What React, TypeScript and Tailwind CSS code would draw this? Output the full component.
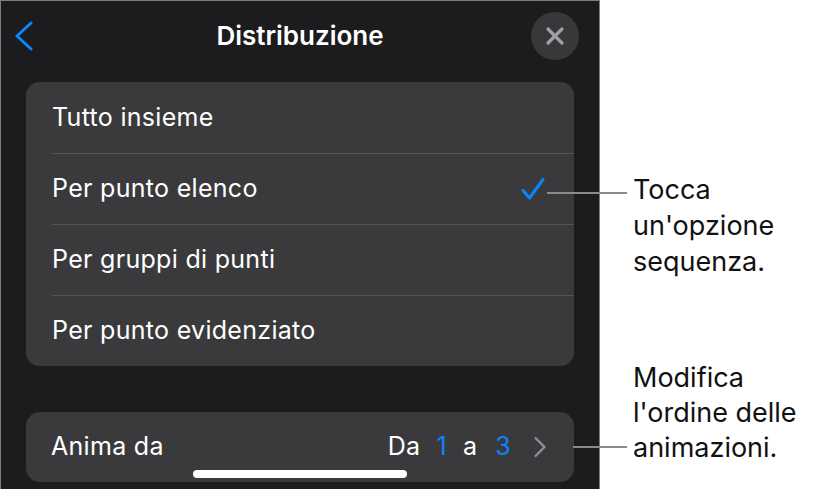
import React from "react";

const options = [
  "Tutto insieme",
  "Per punto elenco",
  "Per gruppi di punti",
  "Per punto evidenziato",
];

function Check() {
  return (
    <svg width="26" height="24" viewBox="0 0 26 24" fill="none">
      <path d="M3 13.5 L9.5 21 L23 2.5" stroke="#0a84ff" strokeWidth="3" strokeLinecap="round" strokeLinejoin="round" />
    </svg>
  );
}

export default function App() {
  return (
    <div className="relative w-[825px] h-[489px] bg-white overflow-hidden" style={{ fontFamily: "Inter, 'Liberation Sans', sans-serif" }}>
      <div className="flex h-full">
        {/* sheet */}
        <div className="w-[600px] h-[500px] bg-[#1c1c1e] border-l border-t border-r border-[#7c7c7e] flex flex-col">
          <div className="relative h-[70px] flex items-center justify-center">
            <svg className="absolute left-[13px] top-[20px]" width="20" height="30" viewBox="0 0 20 30" fill="none">
              <path d="M17 2 L3 15 L17 28" stroke="#0a84ff" strokeWidth="3" strokeLinecap="round" strokeLinejoin="round" />
            </svg>
            <span className="text-[26px] font-semibold text-white -mt-[2px]">Distribuzione</span>
            <div className="absolute left-[530px] top-[11px] w-[48px] h-[48px] rounded-full bg-[#38383b] flex items-center justify-center">
              <svg width="20" height="20" viewBox="0 0 20 20" fill="none">
                <path d="M3 3 L17 17 M17 3 L3 17" stroke="#a0a0a5" strokeWidth="3.2" strokeLinecap="round" />
              </svg>
            </div>
          </div>

          <div className="mx-[25px] mt-[11px] rounded-[14px] bg-[#3a3a3c] flex flex-col">
            {options.map((o, i) => (
              <div key={o} className="h-[71px] pl-[26px] flex">
                <div className={`flex-1 flex items-center pr-[28px] ${i > 0 ? "border-t border-[#545457]" : ""}`}>
                  <span className="flex-1 text-[25px] text-white tracking-[0.3px]">{o}</span>
                  {i === 1 && <Check />}
                </div>
              </div>
            ))}
          </div>

          <div className="mx-[25px] mt-[46px] h-[70px] rounded-[14px] bg-[#3a3a3c] flex items-center pl-[25px] pr-[27px] text-[25px] text-white tracking-[0.3px]">
            <span className="flex-1">Anima da</span>
            <span>Da</span>
            <span className="ml-[16px] text-[#0a84ff]">1</span>
            <span className="ml-[16px]">a</span>
            <span className="ml-[18px] text-[#0a84ff]">3</span>
            <svg className="ml-[22px]" width="14" height="24" viewBox="0 0 14 24" fill="none">
              <path d="M2.5 3 L11.5 12 L2.5 21" stroke="#8e8e93" strokeWidth="2.4" strokeLinecap="round" strokeLinejoin="round" />
            </svg>
          </div>
        </div>
      </div>

      {/* home indicator */}
      <div className="absolute left-[193px] top-[470px] w-[214px] h-[8px] rounded-full bg-white" />

      {/* callouts */}
      <div className="absolute left-[547px] top-[192px] w-[80px] h-[2px] bg-[#8a8a8a]" />
      <div className="absolute left-[573px] top-[446px] w-[54px] h-[2px] bg-[#8a8a8a]" />

      <div className="absolute left-[633px] top-[172px] text-[27px] leading-[36px] text-[#111]">
        Tocca<br />un'opzione<br />sequenza.
      </div>
      <div className="absolute left-[633px] top-[360px] text-[27px] leading-[35px] text-[#111]">
        Modifica<br />l'ordine delle<br />animazioni.
      </div>
    </div>
  );
}
